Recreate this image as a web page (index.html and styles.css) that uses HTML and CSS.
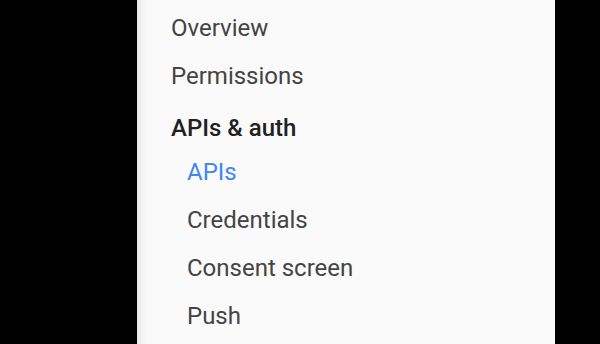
FILE: index.html
```html
<!DOCTYPE html>
<html>
<head>
<meta charset="utf-8">
<link rel="stylesheet" href="styles.css">
</head>
<body>
<nav class="panel">
  <ul class="menu">
    <li class="item">Overview</li>
    <li class="item">Permissions</li>
    <li class="section">APIs &amp; auth</li>
    <li class="item sub active">APIs</li>
    <li class="item sub">Credentials</li>
    <li class="item sub">Consent screen</li>
    <li class="item sub">Push</li>
  </ul>
</nav>
</body>
</html>
```
FILE: styles.css
```css
html, body {
  margin: 0;
  padding: 0;
  background: #000;
  height: 344px;
  overflow: hidden;
}
.panel {
  margin-left: 137px;
  width: 418px;
  height: 344px;
  background: linear-gradient(to right, #e9e9e9 0px, #f3f3f3 5px, #fafafa 11px, #fafafa 100%);
  font-family: Roboto, "Liberation Sans", sans-serif;
  font-size: 24px;
}
.menu {
  list-style: none;
  margin: 0;
  padding: 3.5px 0 0 0;
}
.item {
  line-height: 48px;
  padding-left: 34px;
  color: #444;
}
.section {
  padding: 8px 0 0 34px;
  line-height: 40px;
  font-weight: 500;
  color: #212121;
}
.sub {
  padding-left: 50px;
}
.active {
  color: #4285f4;
}
```
